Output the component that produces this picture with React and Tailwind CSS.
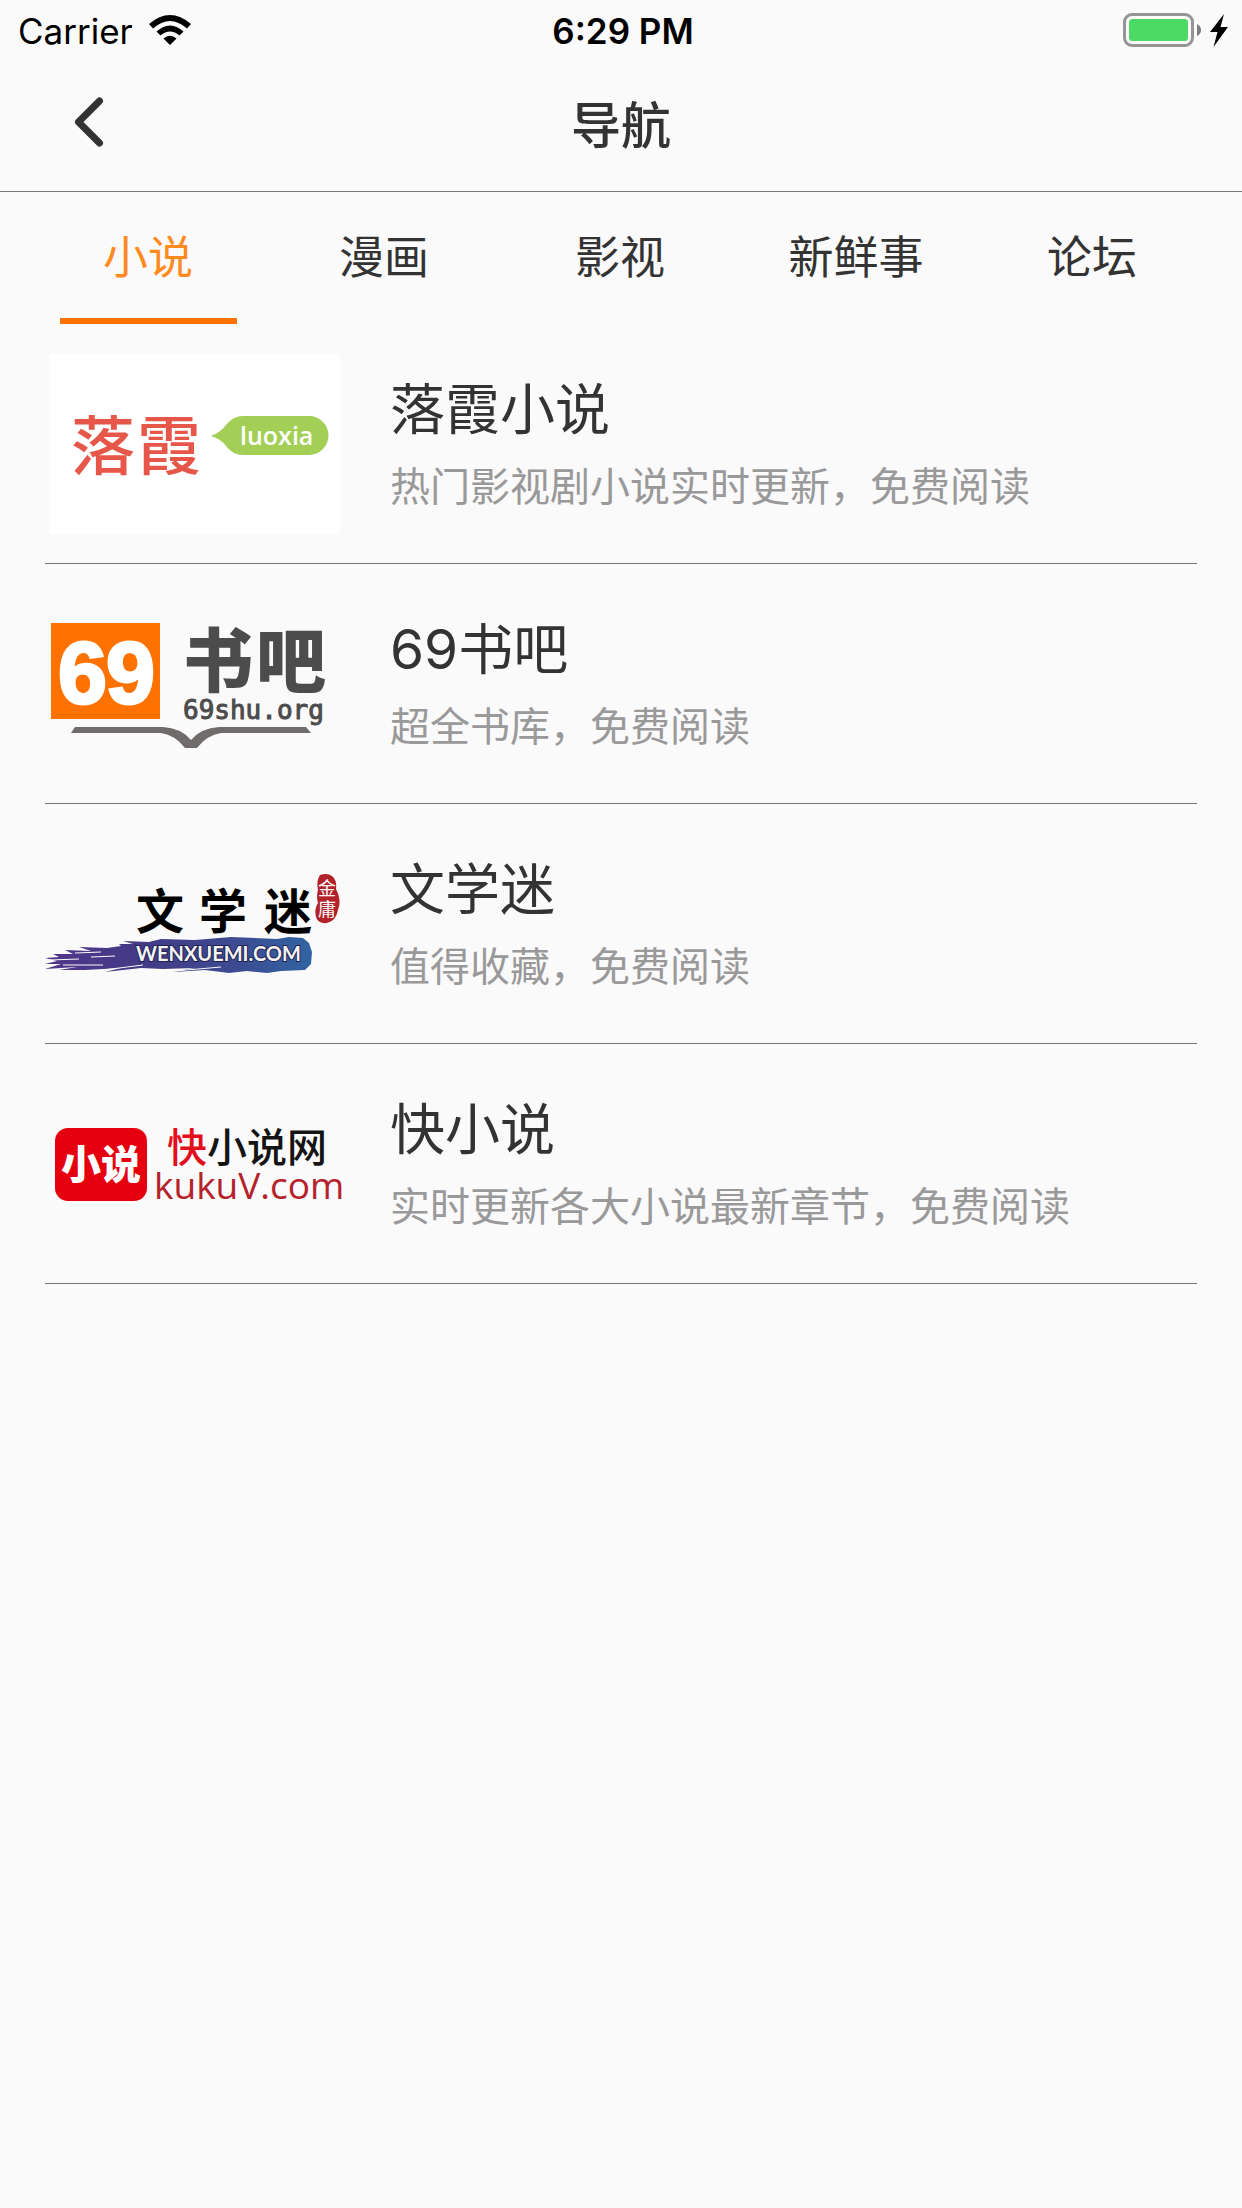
import React from "react";

const TABS = ["小说", "漫画", "影视", "新鲜事", "论坛"];

function LuoxiaLogo() {
  return (
    <svg viewBox="0 0 300 180" className="w-full" role="img" aria-label="落霞">
      <rect x="5" y="0" width="290" height="180" fill="#fff" />
      <text x="26 92" y="115" fontSize="64" fill="#e6574a" className="font-['Noto_Sans_CJK_SC',sans-serif] font-medium">
        落霞
      </text>
      <path d="M166 82 Q176 78 181 71 Q188 62 198 62 H264 A19.5 19.5 0 0 1 264 101 H198 Q188 101 181 92 Q176 85 166 82Z" fill="#a3cf57" />
      <text x="195" y="91" fontSize="25" fill="#fff" className="font-['Open_Sans',sans-serif] font-semibold">
        luoxia
      </text>
    </svg>
  );
}

function Shu69Logo() {
  return (
    <svg viewBox="0 0 300 180" className="w-full" role="img" aria-label="69书吧">
      <rect x="6" y="29" width="109" height="96" fill="#ff7200" />
      <text x="13 61" y="109" fontSize="88" fill="#fff" stroke="#fff" strokeWidth="3" className="font-['Liberation_Sans_Narrow','Liberation_Sans',sans-serif] font-bold">
        69
      </text>
      <text x="138 211" y="93" fontSize="70" fill="#4c4c4c" className="font-['Noto_Sans_CJK_SC',sans-serif] font-black">
        书吧
      </text>
      <text x="138" y="125" fontSize="26" fill="#4c4c4c" stroke="#4c4c4c" strokeWidth="1" className="font-['DejaVu_Sans_Mono',monospace]">
        69shu.org
      </text>
      <path d="M30 133 H118 Q136 134 146 146 Q156 134 174 133 H261 L266 139 H176 Q162 141 152 154 H140 Q130 141 116 139 H26Z" fill="#706c6c" />
    </svg>
  );
}

function WenxuemiLogo() {
  return (
    <svg viewBox="0 0 300 180" className="w-full" role="img" aria-label="文学迷">
      <defs>
        <linearGradient id="brush" x1="0" x2="1" y1="0" y2="0">
          <stop offset="0" stopColor="#50368a" />
          <stop offset="0.35" stopColor="#443a86" />
          <stop offset="0.7" stopColor="#3d4a91" />
          <stop offset="1" stopColor="#3164a2" />
        </linearGradient>
      </defs>
      <path
        d="M0 124 L14 123 L8 120 L28 120 L20 116 L46 117 L34 113 L62 114 L76 112 L74 110 L88 110 L78 107 L104 108 L116 105 L150 106 L186 103 L232 105 L244 103 L258 104 L264 109 L267 118 L266 130 L260 136 L236 137 L222 139 L202 137 L184 139 L160 136 L128 138 L150 134 L118 135 L96 134 L60 138 L76 134 L40 136 L14 136 L32 133 L0 135 L16 130 L0 130 L12 127Z"
        fill="url(#brush)"
      />
      <path d="M4 126 L34 125 M18 131 L58 131 M30 119 L56 118 M58 136 L98 131 M130 137 L176 133 M46 123 L70 122" stroke="#fafafa" strokeWidth="1" />
      <text x="91 154 219" y="95" fontSize="48" fill="#000" className="font-['Noto_Sans_CJK_SC',sans-serif] font-bold">
        文学迷
      </text>
      <path d="M275 41 Q284 38 289 44 Q292 49 291 55 Q297 66 293 76 Q291 87 282 89 Q273 90 271 83 Q269 75 273 69 Q271 62 273 56 Q271 47 275 41Z" fill="#b2222a" />
      <text x="273" y="61" fontSize="18" fill="#fafafa" className="font-['Noto_Sans_CJK_SC',sans-serif]">
        金
      </text>
      <text x="273" y="82" fontSize="18" fill="#fafafa" className="font-['Noto_Sans_CJK_SC',sans-serif]">
        庸
      </text>
      <text x="91" y="127" fontSize="20" fill="#f4f4f4" stroke="#20234f" strokeWidth="2" paintOrder="stroke" className="font-['Lato',sans-serif] font-bold">
        WENXUEMI.COM
      </text>
    </svg>
  );
}

function KukuLogo() {
  return (
    <svg viewBox="0 0 300 180" className="w-full" role="img" aria-label="快小说网">
      <rect x="10" y="54" width="92" height="73" rx="13" fill="#e6000f" />
      <text x="16" y="105" fontSize="40" fill="#fff" className="font-['Noto_Sans_CJK_SC',sans-serif] font-black">
        小说
      </text>
      <text x="122" y="88" fontSize="40" fill="#141414" className="font-['Noto_Sans_CJK_SC',sans-serif] font-medium">
        <tspan fill="#e3101c">快</tspan>小说网
      </text>
      <text x="109" y="125" fontSize="37" fill="#b5222c" className="font-['Open_Sans',sans-serif]">
        kukuV.com
      </text>
    </svg>
  );
}

const SITES = [
  { name: "落霞小说", note: "热门影视剧小说实时更新，免费阅读", Logo: LuoxiaLogo },
  { name: "69书吧", note: "超全书库，免费阅读", Logo: Shu69Logo },
  { name: "文学迷", note: "值得收藏，免费阅读", Logo: WenxuemiLogo },
  { name: "快小说", note: "实时更新各大小说最新章节，免费阅读", Logo: KukuLogo },
];

function StatusBar() {
  return (
    <div className="flex h-[62px] items-center justify-between pr-[14px] pl-[18px] font-['Inter',sans-serif] text-[35px] leading-[62px] text-black">
      <div className="flex flex-1 items-center gap-[16px]">
        <span>Carrier</span>
        <svg viewBox="0 0 42 30" className="mb-[2px] w-[42px]" aria-label="Wi-Fi">
          <path d="M0 9 Q21 -9 42 9 L38 13.500 Q21 -1.500 4 13.500Z M7.500 16.500 Q21 4.500 34.500 16.500 L30.500 20.500 Q21 12.500 11.500 20.500Z M14.500 23.500 Q21 18 27.500 23.500 L21 30Z" />
        </svg>
      </div>
      <span className="font-semibold">6:29 PM</span>
      <div className="flex flex-1 items-center justify-end">
        <svg viewBox="0 0 105 34" className="mb-[2px] w-[105px]" aria-label="Battery charging">
          <rect x="1.500" y="1.500" width="68" height="31" rx="7.500" fill="none" stroke="#949494" strokeWidth="3" />
          <rect x="6" y="6" width="59" height="22" rx="3.500" fill="#4cd964" />
          <path d="M74 11 Q78 13 78 17 Q78 21 74 23Z" fill="#7d7d7d" />
          <path d="M101 1 L87 19 H94.500 L90.500 34 L105 14 H97.500Z" fill="#000" />
        </svg>
      </div>
    </div>
  );
}

export default function App() {
  return (
    <div className="min-h-screen bg-[#fafafa] font-['Noto_Sans_CJK_SC',sans-serif] text-[#333]">
      <StatusBar />
      <header className="grid h-[130px] grid-cols-3 items-center border-b border-[#777] px-[74px] pb-[10px]">
        <button type="button" aria-label="返回" className="w-[30px]">
          <svg viewBox="0 0 30 50" className="w-[30px]" fill="none" stroke="#333" strokeWidth="7" strokeLinecap="round" strokeLinejoin="round">
            <path d="M25.500 4 L4.500 25 L25.500 46" />
          </svg>
        </button>
        <h1 className="text-center text-[50px] leading-[72px] font-medium">导航</h1>
      </header>
      <nav className="flex pr-[32px] pl-[30px]">
        {TABS.map((tab, i) => (
          <button key={tab} type="button" aria-current={i === 0 ? "page" : undefined} className="flex flex-1 flex-col items-center">
            <span className={`pt-[30px] pb-[30px] text-[45px] leading-[66px] ${i === 0 ? "text-[#ff8a1f]" : ""}`}>{tab}</span>
            <span className={`h-[6px] w-3/4 ${i === 0 ? "bg-[#ff7200]" : ""}`} />
          </button>
        ))}
      </nav>
      <ul className="px-[45px]">
        {SITES.map(({ name, note, Logo }) => (
          <li key={name} className="border-b border-[#777]">
            <a href="#" className="flex h-[239px] items-center gap-[45px]">
              <div className="w-[300px] shrink-0">
                <Logo />
              </div>
              <div className="min-w-0 flex-1">
                <h2 className="font-['Inter','Noto_Sans_CJK_SC',sans-serif] text-[55px] leading-[80px]">{name}</h2>
                <p className="text-[40px] leading-[70px] text-[#999]">{note}</p>
              </div>
            </a>
          </li>
        ))}
      </ul>
    </div>
  );
}
